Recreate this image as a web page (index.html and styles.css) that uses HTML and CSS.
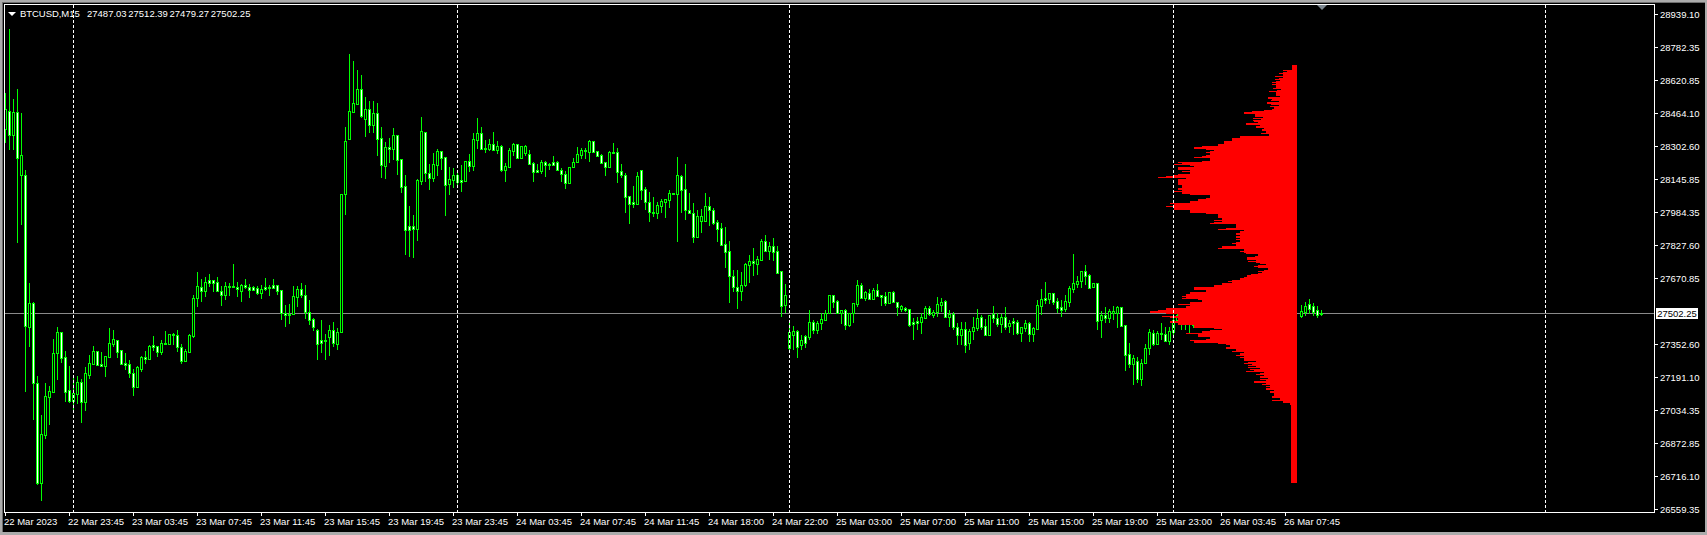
FILE: index.html
```html
<!DOCTYPE html>
<html lang="en">
<head>
  <meta charset="UTF-8" />
  <meta name="viewport" content="width=device-width, initial-scale=1" />
  <title>BTCUSD,M15</title>
  <link rel="stylesheet" href="styles.css">
</head>
<body>
  <div class="terminal">
    <div class="top-row">
      <div class="plot">
        <svg id="chart" class="chart" width="1649" height="507" viewBox="5 5 1649 507"></svg>
        <div class="legend">
          <span class="legend-arrow"></span>
          <span class="legend-name">BTCUSD,M15</span>
          <span class="legend-values">27487.03 27512.39 27479.27 27502.25</span>
        </div>
        <span class="shift-mark"></span>
      </div>
      <div class="price-axis">
        <div class="price-row">28939.10</div>
        <div class="price-row">28782.35</div>
        <div class="price-row">28620.85</div>
        <div class="price-row">28464.10</div>
        <div class="price-row">28302.60</div>
        <div class="price-row">28145.85</div>
        <div class="price-row">27984.35</div>
        <div class="price-row">27827.60</div>
        <div class="price-row">27670.85</div>
        <div class="price-row hidden-tick"></div>
        <div class="price-row">27352.60</div>
        <div class="price-row">27191.10</div>
        <div class="price-row">27034.35</div>
        <div class="price-row">26872.85</div>
        <div class="price-row">26716.10</div>
        <div class="price-row">26559.35</div>
        <div class="current-price">27502.25</div>
      </div>
    </div>
    <div class="time-axis">
      <div class="time-cell">22 Mar 2023</div>
      <div class="time-cell">22 Mar 23:45</div>
      <div class="time-cell">23 Mar 03:45</div>
      <div class="time-cell">23 Mar 07:45</div>
      <div class="time-cell">23 Mar 11:45</div>
      <div class="time-cell">23 Mar 15:45</div>
      <div class="time-cell">23 Mar 19:45</div>
      <div class="time-cell">23 Mar 23:45</div>
      <div class="time-cell">24 Mar 03:45</div>
      <div class="time-cell">24 Mar 07:45</div>
      <div class="time-cell">24 Mar 11:45</div>
      <div class="time-cell">24 Mar 18:00</div>
      <div class="time-cell">24 Mar 22:00</div>
      <div class="time-cell">25 Mar 03:00</div>
      <div class="time-cell">25 Mar 07:00</div>
      <div class="time-cell">25 Mar 11:00</div>
      <div class="time-cell">25 Mar 15:00</div>
      <div class="time-cell">25 Mar 19:00</div>
      <div class="time-cell">25 Mar 23:00</div>
      <div class="time-cell">26 Mar 03:45</div>
      <div class="time-cell">26 Mar 07:45</div>
    </div>
  </div>
  <script src="chart.js"></script>
</body>
</html>
```

FILE: styles.css
```css
html, body {
  margin: 0;
  height: 535px;
  overflow: hidden;
}

body {
  background: #ababab;
  font-family: "Liberation Sans", Arial, sans-serif;
  font-size: 9.5px;
  line-height: 11px;
  color: #fff;
}

.terminal {
  box-sizing: border-box;
  width: 1703px;
  height: 530px;
  margin: 2px 0 0 2px;
  padding: 1px 0 0 1px;
  border: 1px solid #6e6e6e;
  border-width: 1px 0 0 1px;
  background: #000;
}

.top-row {
  display: flex;
  height: 509px;
}

.plot {
  position: relative;
  box-sizing: border-box;
  width: 1651px;
  height: 509px;
  border: 1px solid #fff;
}

.chart {
  display: block;
  shape-rendering: crispEdges;
}

/* Symbol line in the top left corner */
.legend {
  position: absolute;
  top: 3px;
  left: 3px;
  display: flex;
  align-items: center;
  white-space: nowrap;
}

.legend-arrow {
  width: 0;
  height: 0;
  margin-right: 4px;
  border: 4px solid transparent;
  border-top: 4px solid #fff;
  border-bottom: 0;
}

.legend-name {
  width: 67px;
  letter-spacing: -0.05px;
}

.legend-values {
  word-spacing: -1px;
}

.shift-mark {
  position: absolute;
  top: 0;
  left: 1312px;
  width: 0;
  height: 0;
  border: 5px solid transparent;
  border-top: 5px solid #7d8790;
  border-bottom: 0;
}

/* Price scale */
.price-axis {
  position: relative;
  box-sizing: border-box;
  width: 50px;
  padding-top: 5px;
}

.price-row {
  display: flex;
  height: 33px;
  white-space: nowrap;
}

.price-row::before {
  content: "";
  width: 3px;
  height: 1px;
  margin: 5px 2px 0 0;
  background: #fff;
}

.hidden-tick::before {
  background: none;
}

.current-price {
  position: absolute;
  top: 304px;
  left: 1px;
  width: 42px;
  height: 11px;
  background: #fff;
  color: #000;
  text-align: center;
}

/* Time scale */
.time-axis {
  display: flex;
}

.time-cell {
  flex: 0 0 64px;
  white-space: nowrap;
}

.time-cell::before {
  content: "";
  display: block;
  width: 1px;
  height: 3px;
  margin-left: 1px;
  background: #fff;
}
```

FILE: chart.js
```js
// Candles are [high, bodyTop, bodyBottom, low, white], read per 4px slot.
// scale 3 rows are y offsets from y0 at 3x, scale 1 rows are page pixels.
var segments = [
  { x: 5, y0: 0, scale: 1, rows: [
    [93, 109, 129, 143, 0], [29, 111, 135, 150, 1], [99, 112, 135, 150, 0],
    [89, 112, 158, 243, 1], [113, 155, 175, 225, 0]
  ] },
  { x: 25, y0: 230, scale: 3, rows: [
    [-180,-165,287,485,1],[160,220,290,350,0],[215,220,458,570,1],[438,458,758,765,1],[555,612,760,812,0],
    [460,498,614,626,0],[468,484,500,585,0],[327,370,485,485,0],[292,307,368,450,0],[305,307,383,400,1],
    [363,382,485,515,1],[408,481,513,518,1],[440,490,513,540,0],[438,457,491,522,0],[448,457,515,578,1],
    [412,430,515,543,0],[375,400,434,447,0],[348,364,402,405,0],[362,364,405,408,1],[365,403,407,408,1],
    [380,379,407,440,0],[294,340,380,383,0],[300,328,341,350,0],[330,331,365,384,1],[360,361,403,404,1],
    [370,400,404,420,1],[390,401,428,445,1],[418,428,470,497,1],[408,412,470,473,0],[378,382,416,426,0],
    [363,382,388,402,1],[345,347,388,390,0],[318,346,350,362,1],[348,349,365,380,1],[330,340,365,375,0],
    [304,339,342,345,1],[312,313,342,345,0],[310,312,316,345,1],[300,316,352,366,1],[342,352,392,402,1],
    [358,364,392,393,0],[312,316,365,366,0],[195,205,317,323,0],[126,169,205,230,0],[148,172,182,215,1],
    [142,156,182,200,0],[132,151,158,172,1],[150,151,158,186,1],[141,156,183,186,1],[168,182,194,228,1],
    [156,169,194,209,0],[158,168,171,199,1],[102,168,172,172,1],[156,172,178,200,1],[162,164,182,216,0],
    [148,164,170,176,1],[162,170,179,204,1],[168,172,179,183,1],[168,173,188,195,1],[166,176,188,206,0],
    [144,172,176,184,1],[165,170,172,198,1],[148,166,174,176,1],[164,166,182,194,1],[180,181,249,270,1],
    [225,250,254,290,1],[222,251,254,282,1],[168,199,251,252,0],[168,178,200,230,0],[160,178,195,204,1],
    [165,196,246,267,1],[210,247,270,285,1],[265,268,290,302,1],[298,301,341,390,1],[270,331,339,370,1],
    [312,330,333,390,0],[285,301,320,378,0],[277,301,339,352,1],[295,307,341,360,0]
  ] },
  { x: 341, y0: 40, scale: 3, rows: [
    [462,463,876,880,0],[262,304,461,525,0],[42,214,296,296,0],[64,190,216,218,0],[90,148,191,191,0],
    [105,148,228,235,1],[172,208,236,290,0],[183,208,254,280,1],[183,220,254,278,0],[190,220,296,348,1],
    [262,295,374,414,1],[306,322,377,417,0],[294,322,326,370,1],[264,286,326,360,0],[285,286,359,405,1],
    [358,358,440,459,1],[405,439,569,645,1],[498,559,569,651,1],[525,559,566,654,1],[418,421,566,603,0],
    [232,274,424,435,0],[277,277,398,425,1],[373,400,413,450,1],[339,373,413,426,0],[326,334,374,408,0],
    [334,334,353,390,1],[352,352,434,527,1],[380,418,431,465,0],[385,406,419,445,0],[398,406,425,445,1],
    [375,421,425,456,1],[363,364,423,425,0],[343,364,377,396,1],[280,298,377,392,0],[234,280,300,328,0],
    [262,280,326,328,1],[300,324,327,340,1],[297,313,327,333,0],[277,313,329,330,1],[304,319,329,342,0],
    [316,319,389,396,1],[370,379,389,426,0],[325,331,380,382,0],[310,313,332,348,0],[312,313,353,354,1],
    [317,319,353,354,0],[315,319,339,348,0],[331,341,371,376,1],[366,370,395,426,1],[372,391,395,396,1],
    [361,367,393,402,0],[363,367,374,411,1],[370,372,374,390,1],[348,367,374,378,1],[362,367,389,390,1],
    [384,389,403,426,1],[393,403,428,447,1],[380,382,428,429,0],[354,367,382,383,0],[321,343,367,369,0],
    [325,331,344,356,0],[323,330,334,358,1],[300,304,335,366,0],[304,304,335,336,1],[333,334,347,348,1],
    [342,346,368,372,1],[365,367,380,408,1],[333,337,380,381,0],[309,337,340,342,1],[324,337,395,428,1],
    [372,394,406,414,1],[400,406,470,518,1],[469,469,491,552,1],[438,487,491,504,1],[396,409,491,491,0],
    [391,391,449,480,1],[442,448,485,510,1],[457,485,515,546,1],[472,515,518,530,1],[487,496,518,537,0],
    [476,484,497,520,0],[478,478,485,533,0],[450,460,479,505,0],[460,460,462,462,1],[351,406,461,606,0],
    [406,408,449,518,1],[373,448,509,540,1],[460,509,518,522,1],[489,518,591,608,1],[510,527,591,594,0],
    [507,527,542,578,0],[460,497,542,545,0],[472,497,509,557,1],[503,509,549,555,1],[541,547,566,605,1]
  ] },
  { x: 721, y0: 230, scale: 3, rows: [
    [-20,-5,44,46,1],[-10,43,65,113,1],[33,64,137,218,1],[120,137,170,185,1],[120,172,182,236,1],
    [125,164,182,212,0],[100,103,165,170,0],[75,94,104,158,0],[55,94,100,138,1],[78,87,102,135,0],
    [28,34,89,90,0],[15,34,62,66,1],[35,49,63,90,0],[25,49,65,92,1],[48,64,128,130,1],
    [124,124,227,260,1],[162,195,225,250,0],[280,306,354,370,0],[288,304,316,360,0],[300,304,350,385,1],
    [315,330,345,360,0],[316,319,340,355,1],[240,277,321,330,0],[270,277,300,312,1],[272,279,300,312,0],
    [250,268,278,300,0],[240,250,269,270,0],[195,196,250,252,0],[195,196,216,235,1],[210,214,250,252,1],
    [240,241,248,282,0],[238,241,285,300,1],[250,250,285,290,0],[220,220,250,280,0],[150,165,222,232,0],
    [160,165,203,205,1],[182,186,205,212,0],[178,189,207,208,1],[175,180,208,210,0],[162,180,198,200,1],
    [196,196,200,228,1],[185,198,219,228,1],[186,186,219,220,0],[184,186,216,218,1],[216,217,230,258,1],
    [225,229,236,245,0],[230,234,240,245,1],[236,238,284,290,1],[265,277,281,330,1],[262,274,278,300,1],
    [250,262,275,312,0],[228,235,263,268,0],[228,235,253,258,1],[240,246,254,265,0],[202,223,246,262,0],
    [205,216,225,245,0],[210,214,260,262,1],[240,252,260,290,0],[246,252,290,300,1],[280,290,315,345,1],
    [275,298,315,345,0],[275,298,345,370,1],[298,302,340,360,0],[260,292,302,330,0],[238,264,294,302,0],
    [255,262,290,300,1],[268,289,314,318,1],[255,256,314,315,0],[228,252,265,280,1],[248,265,282,292,1],
    [252,262,282,310,0],[232,262,290,300,1],[270,278,288,310,0],[265,274,278,315,1],[270,275,308,315,1],
    [292,292,308,335,0],[270,280,293,305,0],[276,280,311,335,1],[290,295,311,335,0],[210,226,296,298,0],
    [178,208,228,255,0],[156,205,209,222,1],[190,190,206,222,0],[190,190,215,225,1],[205,214,233,250,1]
  ] },
  { x: 1061, y0: 240, scale: 3, rows: [
    [180,202,210,230,1],[165,184,208,215,0],[138,145,185,202,0],[42,130,146,160,0],[108,122,131,145,0],
    [94,94,122,145,0],[75,94,107,135,1],[102,106,143,144,1],[130,130,140,145,0],[130,130,242,270,1],
    [213,226,241,293,0],[200,226,233,250,1],[208,214,233,250,0],[198,214,220,240,0],[198,202,220,264,0],
    [201,202,258,260,1],[256,256,344,392,1],[309,343,373,385,1],[345,355,373,434,0],[352,364,416,428,1],
    [358,370,416,437,0],[312,325,370,372,0],[267,277,325,345,0],[270,280,311,318,1],[273,280,311,314,0],
    [250,280,282,300,0],[262,283,304,306,1],[262,274,304,315,0],[222,240,277,290,0],[222,225,240,250,0],
    [230,240,250,270,1],[235,240,246,270,0],[240,244,250,278,1],[240,244,255,265,0],[245,250,258,265,1]
  ] },
  { x: 1301, y0: 0, scale: 1, rows: [
    [305,311,316,318,0],[302,306,312,316,0],[299,304,309,314,1],[303,306,312,316,1],[306,310,315,318,1],[310,313,314,316,0]
  ] }
];

// Volume profile: [y, left edge], each step holds until the next y.
var profile = [
  [65,1292],[70,1283],[75,1279],[80,1276],[88,1273],[92,1272],[100,1271],[106,1270],[109,1264],[111,1248],
  [114,1255],[118,1253],[121,1250],[125,1256],[129,1262],[133,1265],[136,1240],[138,1232],[141,1224],
  [144,1218],[146,1202],[147,1194],[149,1206],[150,1214],[151,1210],[152,1206],[153,1210],[155,1206],[156,1202],
  [157,1194],[158,1210],[161,1202],[162,1178],[163,1182],[164,1174],[165,1190],[166,1194],[167,1178],[170,1190],
  [171,1182],[172,1190],[174,1178],[175,1174],[176,1166],[177,1158],[178,1186],[179,1178],[185,1182],[188,1178],
  [190,1182],[191,1174],[192,1182],[194,1190],[195,1210],[198,1206],[199,1198],[201,1190],[203,1170],[204,1174],
  [206,1166],[207,1174],[210,1190],[213,1206],[214,1218],[218,1222],[220,1214],[221,1222],[222,1214],[223,1210],
  [224,1236],[228,1226],[229,1218],[230,1236],[246,1222],[248,1218],[249,1240],[253,1250],[256,1247],[260,1252],
  [264,1258],[268,1264],[271,1258],[274,1247],[277,1240],[280,1232],[283,1222],[285,1214],[287,1194],[290,1206],
  [292,1190],[294,1186],[296,1182],[297,1186],[298,1182],[299,1198],[300,1202],[302,1190],[304,1178],[305,1190],
  [306,1186],[308,1166],[310,1158],[311,1150],[313,1166],[314,1178],[316,1162],[317,1170],[318,1178],[321,1170],
  [323,1178],[325,1194],[328,1214],[329,1222],[330,1210],[331,1202],[333,1186],[334,1198],[337,1210],[339,1206],
  [340,1190],[341,1194],[343,1218],[344,1226],[349,1232],[352,1240],[355,1236],[358,1244],[361,1248],[365,1252],
  [369,1246],[372,1256],[376,1260],[380,1258],[383,1266],[387,1262],[390,1270],[393,1274],[396,1268],[398,1276],
  [401,1283],[403,1290],[405,1291],[483,0]
];

// Stretches of the profile that get a rougher edge, row by row
var roughRows = [[70, 136], [230, 246], [249, 285], [344, 401]];

var PROFILE_RIGHT = 1297;
var separators = [73, 457, 789, 1173, 1545];

function box(x, y, w, h) {
  return 'M' + x + ' ' + y + 'h' + w + 'v' + h + 'h' + (-w) + 'z';
}

function buildCandles() {
  var green = '', white = '', black = '';
  segments.forEach(function (seg) {
    seg.rows.forEach(function (c, i) {
      var x = seg.x + i * 4;
      var hi = Math.round(seg.y0 + c[0] / seg.scale);
      var top = Math.round(seg.y0 + c[1] / seg.scale);
      var bot = Math.round(seg.y0 + c[2] / seg.scale);
      var lo = Math.round(seg.y0 + c[3] / seg.scale);
      green += box(x, hi, 1, Math.max(lo - hi, 1));
      green += box(x - 1, top, 3, Math.max(bot - top, 1) + 1);
      if (bot - top > 1) {
        if (c[4]) white += box(x, top + 1, 1, bot - top - 1);
        else black += box(x, top + 1, 1, bot - top - 1);
      }
    });
  });
  return { green: green, white: white, black: black };
}

function edgeNoise(y) {
  var inRange = roughRows.some(function (r) { return y >= r[0] && y < r[1]; });
  if (!inRange) return 0;
  var n = Math.sin(y * 12.9898) * 43758.5453;
  return Math.round((n - Math.floor(n)) * 3) * 4 - 4;
}

function buildProfile() {
  var d = '';
  for (var i = 0; i < profile.length - 1; i++) {
    for (var y = profile[i][0]; y < profile[i + 1][0]; y++) {
      var left = Math.min(profile[i][1] + edgeNoise(y), PROFILE_RIGHT - 1);
      d += box(left, y, PROFILE_RIGHT - left, 1);
    }
  }
  return d;
}

function drawChart() {
  var candles = buildCandles();
  var html = '';
  html += '<rect x="5" y="313" width="1649" height="1" fill="#8a8a8a"/>';
  html += '<path d="' + candles.green + '" fill="#00ff00"/>';
  html += '<path d="' + candles.white + '" fill="#ffffff"/>';
  html += '<path d="' + candles.black + '" fill="#000000"/>';
  html += '<path d="' + buildProfile() + '" fill="#ff0000"/>';
  separators.forEach(function (x) {
    html += '<line x1="' + (x + 0.5) + '" y1="5" x2="' + (x + 0.5) + '" y2="512" stroke="#ffffff" stroke-dasharray="3 2"/>';
  });
  document.getElementById('chart').innerHTML = html;
}

drawChart();
```
